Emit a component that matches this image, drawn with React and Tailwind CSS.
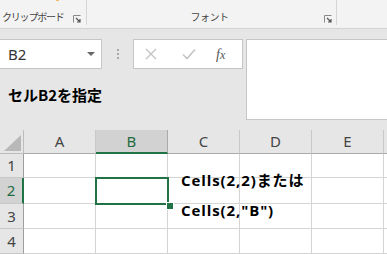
import React from "react";

const font = { fontFamily: '"Noto Sans", "Noto Sans CJK JP", sans-serif' };
const jp = { fontFamily: '"Noto Sans CJK JP", sans-serif' };
const cellFont = { fontFamily: '"Open Sans", "Noto Sans CJK JP", sans-serif' };

function Launcher() {
  return (
    <svg width="8" height="8" viewBox="0 0 8 8" className="shrink-0">
      <path d="M0.5 7.5V0.5H7.5" fill="none" stroke="#8a8a8a" strokeWidth="1" />
      <path d="M3 3L7 7M4 7H7V4" fill="none" stroke="#555" strokeWidth="1.2" />
    </svg>
  );
}

const cols = ["A", "B", "C", "D", "E", ""];

function HeaderRow() {
  return (
    <div className="flex h-[24px]">
      <div className="w-[24px] shrink-0 bg-[#e6e6e6] border-r border-b border-[#bdbdbd] relative">
        <svg width="24" height="24" className="absolute left-0 top-0">
          <polygon points="4,21 21,21 21,5" fill="#b8b8b8" />
        </svg>
      </div>
      {cols.map((c, i) =>
        c === "B" ? (
          <div
            key={i}
            className="w-[72px] shrink-0 bg-[#d2d2d2] border-r border-[#ababab] border-b-2 border-b-[#217346] flex items-center justify-center text-[15px] text-[#1e6b42]"
            style={font}
          >
            {c}
          </div>
        ) : (
          <div
            key={i}
            className="w-[72px] shrink-0 bg-[#e6e6e6] border-r border-b border-[#c8c8c8] border-b-[#ababab] flex items-center justify-center text-[15px] text-[#444]"
            style={font}
          >
            {c}
          </div>
        )
      )}
    </div>
  );
}

function Row({ n, h, selected, children }) {
  return (
    <div className="flex" style={{ height: h }}>
      <div
        className={
          selected
            ? "w-[24px] shrink-0 bg-[#d2d2d2] border-b border-[#c8c8c8] border-r-2 border-r-[#217346] flex items-center justify-center text-[15px] text-[#1e6b42]"
            : "w-[24px] shrink-0 bg-[#e6e6e6] border-b border-[#c8c8c8] border-r border-r-[#9e9e9e] flex items-center justify-center text-[15px] text-[#444]"
        }
        style={font}
      >
        {n}
      </div>
      {cols.map((c, i) => (
        <div
          key={i}
          className="w-[72px] shrink-0 bg-white border-r border-b border-[#d4d4d4] relative"
        >
          {c === "C" && children}
        </div>
      ))}
    </div>
  );
}

export default function App() {
  return (
    <div className="w-[387px] h-[254px] overflow-hidden bg-[#e6e6e6] relative" style={font}>
      {/* Ribbon */}
      <div className="h-[29px] bg-[#f3f3f3] border-b border-[#d2d2d2] flex relative">
        <div className="absolute left-[56px] top-[-2px] w-[3px] h-[3px] rounded-full bg-[#f0a030]" />
        <div className="w-[87px] h-[25px] border-r border-[#d6d6d6] flex items-end pb-[1px] pl-[2px] pr-[5px] justify-between">
          <span className="whitespace-nowrap text-[10px] leading-[14px] text-[#444] tracking-[-1.2px]" style={jp}>
            クリップボード
          </span>
          <span className="mb-[1px]"><Launcher /></span>
        </div>
        <div className="w-[250px] h-[25px] border-r border-[#d6d6d6] flex items-end pb-[1px] relative">
          <span className="flex-1 whitespace-nowrap text-center text-[10px] leading-[14px] text-[#444] pr-[4px] tracking-[-0.5px]" style={jp}>
            フォント
          </span>
          <span className="absolute right-[4px] bottom-[2px]"><Launcher /></span>
        </div>
      </div>

      {/* Formula area */}
      <div className="h-[101px] flex pt-[10px]">
        <div className="w-[246px] shrink-0 flex flex-col">
          <div className="flex h-[30px]">
            <div className="w-[102px] h-[30px] bg-white border border-[#c6c6c6] border-l-0 flex items-center justify-between pl-[8px] pr-[6px]">
              <span className="text-[15px] text-[#333]">B2</span>
              <svg width="8" height="5" viewBox="0 0 8 5"><polygon points="0,0 8,0 4,4" fill="#666" /></svg>
            </div>
            <div className="w-[31px] flex flex-col items-center justify-center gap-[2px]">
              <div className="w-[2px] h-[2px] bg-[#a8a8a8]" />
              <div className="w-[2px] h-[2px] bg-[#a8a8a8]" />
              <div className="w-[2px] h-[2px] bg-[#a8a8a8]" />
            </div>
            <div className="w-[110px] h-[30px] bg-white border border-[#c6c6c6] flex items-center">
              <svg width="12" height="12" viewBox="0 0 12 12" className="ml-[11px]">
                <path d="M1 1L11 11M11 1L1 11" stroke="#c4c4c4" strokeWidth="1.4" />
              </svg>
              <svg width="14" height="12" viewBox="0 0 14 12" className="ml-[25px]">
                <path d="M1 6.5L5 10.5L13 1.5" fill="none" stroke="#c4c4c4" strokeWidth="1.6" />
              </svg>
              <span
                className="ml-[20px] text-[14px] italic text-[#555]"
                style={{ fontFamily: '"Liberation Serif", serif' }}
              >
                f<span className="text-[12px]">x</span>
              </span>
            </div>
          </div>
          <div className="mt-[16px] pl-[8px] text-[15px] font-bold text-black leading-[20px]" style={jp}>
            セルB2を指定
          </div>
        </div>
        <div className="flex-1 h-[81px] bg-white border border-[#c6c6c6] border-r-0" />
      </div>

      {/* Grid */}
      <HeaderRow />
      <Row n="1" h={24} />
      <Row n="2" h={26} selected>
        <span
          className="absolute left-[13px] top-[-8px] whitespace-nowrap text-[15px] font-bold text-black leading-[20px] tracking-[0.9px] z-10"
          style={cellFont}
        >
          Cells(2,2)または
        </span>
      </Row>
      <Row n="3" h={25}>
        <span
          className="absolute left-[13px] top-[-4px] whitespace-nowrap text-[15px] font-bold text-black leading-[20px] tracking-[0.9px] z-10"
          style={cellFont}
        >
          Cells(2,"B")
        </span>
      </Row>
      <Row n="4" h={25} />

      {/* Selection */}
      <div className="absolute left-[95px] top-[177px] w-[74px] h-[28px] border-2 border-[#217346] pointer-events-none" />
      <div className="absolute left-[166px] top-[202px] w-[6px] h-[6px] bg-[#217346] border border-white box-content" />
    </div>
  );
}
